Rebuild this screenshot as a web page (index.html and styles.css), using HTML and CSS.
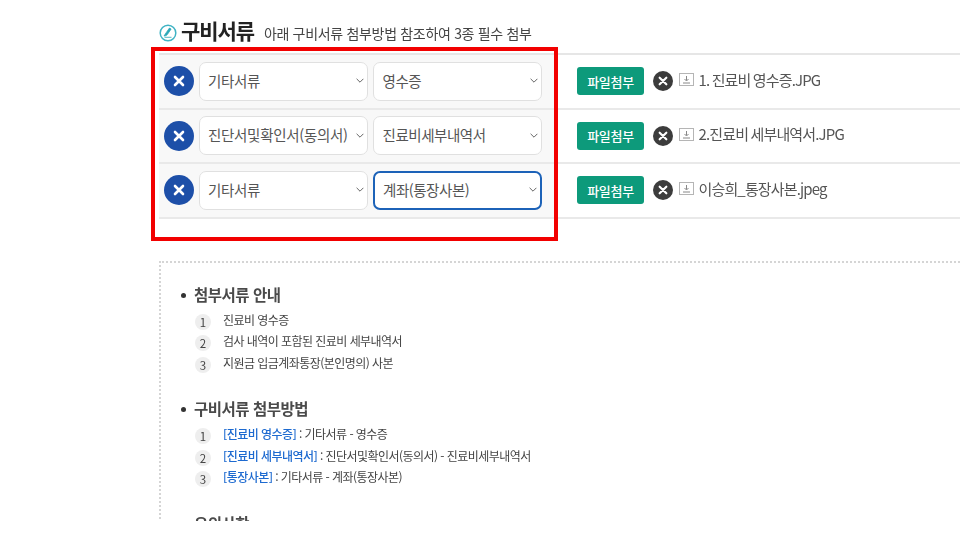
FILE: index.html
```html
<!DOCTYPE html>
<html lang="ko">
<head>
<meta charset="utf-8">
<title>구비서류</title>
<link rel="stylesheet" href="styles.css">
</head>
<body>
<svg class="defs" width="0" height="0" aria-hidden="true">
  <symbol id="chev" viewBox="0 0 8 5"><path d="M.6.8l3.400 3.400L7.400.8" fill="none" stroke="#666" stroke-width="1"/></symbol>
  <symbol id="x" viewBox="0 0 12 12"><path d="M2 2l8 8M10 2l-8 8" fill="none" stroke="#fff" stroke-width="2.6" stroke-linecap="round"/></symbol>
  <symbol id="file" viewBox="0 0 15 13"><rect x=".5" y=".5" width="14" height="12" fill="none" stroke="#b5b5b5"/><path d="M7.500 3v4.500M5.500 6l2 2 2-2M4 10h7" fill="none" stroke="#888"/></symbol>
</svg>
<main class="page">
  <header class="head">
    <svg class="head-icon" viewBox="0 0 18 18" aria-hidden="true"><circle cx="9" cy="9" r="7.800" fill="#fff" stroke="#3fb3c4" stroke-width="1.500"/><path d="M5 12c2.500-.2 3.200-1 4.200-2.700l2.900-4.300-1.700-.9-3 4.300C6.500 9.700 5.800 10.700 5 12zM5.500 13.300h7" fill="#2aa7b8" stroke="#2aa7b8" stroke-width=".8"/></svg>
    <h1 class="head-title">구비서류</h1>
    <p class="head-note">아래 구비서류 첨부방법 참조하여 3종 필수 첨부</p>
  </header>

  <section class="docs">
    <div class="row">
      <div class="cell-left">
        <button class="del-blue"><svg class="x-lg"><use href="#x"/></svg></button>
        <div class="sel sel-a"><span>기타서류</span><svg class="chev"><use href="#chev"/></svg></div>
        <div class="sel sel-b"><span>영수증</span><svg class="chev"><use href="#chev"/></svg></div>
      </div>
      <div class="cell-right">
        <button class="attach">파일첨부</button>
        <button class="del-dark"><svg class="x-sm"><use href="#x"/></svg></button>
        <svg class="file-icon"><use href="#file"/></svg>
        <span class="file-name">1. 진료비 영수증.JPG</span>
      </div>
    </div>
    <div class="row">
      <div class="cell-left">
        <button class="del-blue"><svg class="x-lg"><use href="#x"/></svg></button>
        <div class="sel sel-a"><span>진단서및확인서(동의서)</span><svg class="chev"><use href="#chev"/></svg></div>
        <div class="sel sel-b"><span>진료비세부내역서</span><svg class="chev"><use href="#chev"/></svg></div>
      </div>
      <div class="cell-right">
        <button class="attach">파일첨부</button>
        <button class="del-dark"><svg class="x-sm"><use href="#x"/></svg></button>
        <svg class="file-icon"><use href="#file"/></svg>
        <span class="file-name">2.진료비 세부내역서.JPG</span>
      </div>
    </div>
    <div class="row">
      <div class="cell-left">
        <button class="del-blue"><svg class="x-lg"><use href="#x"/></svg></button>
        <div class="sel sel-a"><span>기타서류</span><svg class="chev"><use href="#chev"/></svg></div>
        <div class="sel sel-b sel-focus"><span>계좌(통장사본)</span><svg class="chev"><use href="#chev"/></svg></div>
      </div>
      <div class="cell-right">
        <button class="attach">파일첨부</button>
        <button class="del-dark"><svg class="x-sm"><use href="#x"/></svg></button>
        <svg class="file-icon"><use href="#file"/></svg>
        <span class="file-name">이승희_통장사본.jpeg</span>
      </div>
    </div>
    <div class="highlight"></div>
  </section>

  <section class="guide">
    <h2 class="guide-title">첨부서류 안내</h2>
    <ol class="steps">
      <li><i>1</i><span>진료비 영수증</span></li>
      <li><i>2</i><span>검사 내역이 포함된 진료비 세부내역서</span></li>
      <li><i>3</i><span>지원금 입금계좌통장(본인명의) 사본</span></li>
    </ol>
    <h2 class="guide-title">구비서류 첨부방법</h2>
    <ol class="steps">
      <li><i>1</i><span><b>[진료비 영수증]</b> : 기타서류 - 영수증</span></li>
      <li><i>2</i><span><b>[진료비 세부내역서]</b> : 진단서및확인서(동의서) - 진료비세부내역서</span></li>
      <li><i>3</i><span><b>[통장사본]</b> : 기타서류 - 계좌(통장사본)</span></li>
    </ol>
    <h2 class="guide-title guide-plain">유의사항</h2>
  </section>
</main>
</body>
</html>
```
FILE: styles.css
```css
* { box-sizing: border-box; }
html, body { margin: 0; background: #fff; }
body { width: 960px; height: 540px; overflow: hidden; font-family: "Noto Sans CJK KR", "Noto Sans", sans-serif; color: #444; }
.defs { position: absolute; }
.page { height: 521px; overflow: hidden; padding: 18px 0 0 159px; filter: blur(0.35px); }

.head { display: flex; align-items: center; height: 27px; margin-bottom: 8px; }
.head-icon { width: 18px; height: 18px; margin: 3px 4px 0 0; flex: none; }
.head-title { margin: -2px 10px 0 0; font-size: 21px; font-weight: 700; color: #222; letter-spacing: -1.1px; line-height: 27px; }
.head-note { margin: 0; font-size: 14px; color: #444; letter-spacing: -0.32px; line-height: 27px; padding-top: 3px; }

.docs { position: relative; border-top: 2px solid #e6e6e6; }
.row { display: flex; height: 54.5px; border-bottom: 2px solid #e9e9e9; }
.row:last-of-type { border-bottom-color: #dedede; }
.cell-left { width: 399px; flex: none; display: flex; align-items: center; gap: 5px; padding-left: 5px; background: #f8f8f8; }
.cell-right { display: flex; align-items: center; padding-left: 19px; }

.del-blue { width: 30px; height: 30px; padding: 0; border: 0; border-radius: 50%; background: #1d4fa8; display: flex; align-items: center; justify-content: center; flex: none; }
.x-lg { width: 12px; height: 12px; }
.sel { height: 39px; display: flex; align-items: center; justify-content: space-between; padding-bottom: 2px; border: 1.5px solid #e0e0e0; border-radius: 7px; background: #fff; font-size: 14.5px; letter-spacing: -0.3px; color: #555; flex: none; }
.sel-a { width: 169px; padding-left: 8px; padding-right: 3px; }
.sel-b { width: 169px; padding-left: 8.5px; padding-right: 3px; letter-spacing: -0.45px; }
.sel-focus { border: 2px solid #1c62b8; padding-left: 8px; }
.chev { width: 8px; height: 5px; margin-top: 1px; flex: none; }

.attach { width: 67px; height: 28px; padding: 0; border: 0; border-radius: 3px; background: #0d9a7b; color: #fff; font: 500 13px "Noto Sans CJK KR", sans-serif; letter-spacing: -0.3px; flex: none; }
.del-dark { width: 20px; height: 20px; margin-left: 9px; padding: 0; border: 0; border-radius: 50%; background: #3c3c3c; display: flex; align-items: center; justify-content: center; flex: none; }
.x-sm { width: 10px; height: 10px; }
.file-icon { width: 15px; height: 13px; margin: 0 0 3px 6px; flex: none; }
.file-name { margin: 0 0 4px 4.5px; font-size: 15px; letter-spacing: -0.85px; word-spacing: -1px; color: #555; }

.highlight { position: absolute; left: -8px; top: -8px; width: 407px; height: 194px; border: 4px solid #f20000; pointer-events: none; }

.guide { margin-top: 42px; height: 270px; padding: 19px 0 0 20px; border-top: 2px dotted #d5d5d5; border-left: 2px dotted #d5d5d5; }
.guide-title { position: relative; margin: 0 0 5px; padding-left: 13px; font-size: 15.5px; font-weight: 700; line-height: 24px; color: #4a4a4a; letter-spacing: -0.5px; }
.guide-title::before { content: ""; position: absolute; left: 0; top: 11px; width: 5px; height: 5px; border-radius: 50%; background: #333; }
.guide-plain::before { display: none; }
.steps { list-style: none; margin: 0 0 21px 14px; padding: 0; }
.steps li { display: flex; height: 21.5px; font-size: 12px; letter-spacing: -0.55px; line-height: 18px; color: #444; }
.steps i { width: 16px; height: 16px; margin: 3px 12px 0 0; border-radius: 50%; background: #eee; font-style: normal; font-size: 11.5px; line-height: 17px; text-align: center; letter-spacing: 0; flex: none; }
.steps b { font-weight: 500; color: #1d6ad0; }
```
